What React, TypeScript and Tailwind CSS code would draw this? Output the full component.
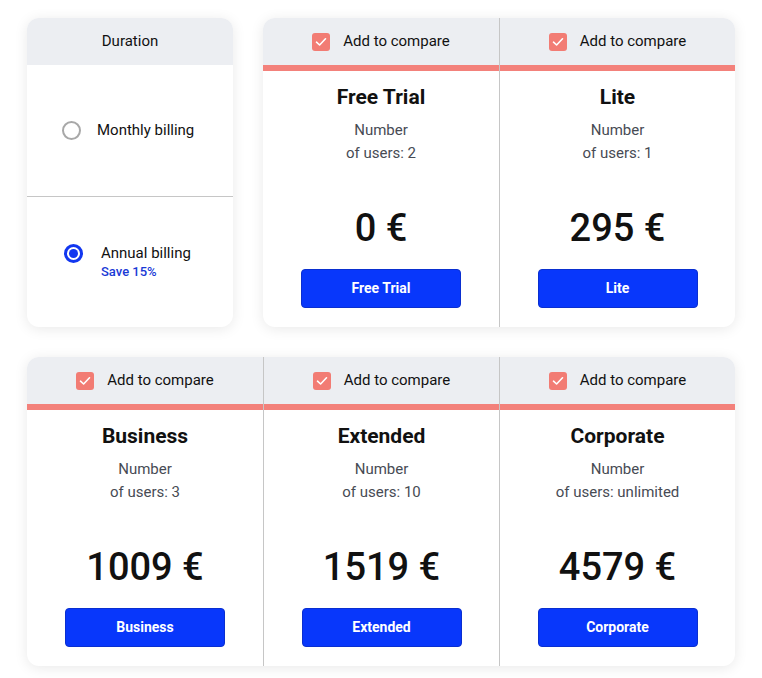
// @ts-nocheck
import React from "react"

const plans1 = [
  { name: "Free Trial", users: "2", price: "0 €" },
  { name: "Lite", users: "1", price: "295 €" },
]

const plans2 = [
  { name: "Business", users: "3", price: "1009 €" },
  { name: "Extended", users: "10", price: "1519 €" },
  { name: "Corporate", users: "unlimited", price: "4579 €" },
]

function Check() {
  return (
    <span className="w-[18px] h-[18px] rounded-[3px] bg-[#f27c74] flex items-center justify-center">
      <svg width="12" height="10" viewBox="0 0 12 10" fill="none">
        <path d="M1.5 5.2 L4.6 8 L10.5 1.8" stroke="white" strokeWidth="1.6" strokeLinecap="round" strokeLinejoin="round" />
      </svg>
    </span>
  )
}

function Plan({ plan, first }) {
  return (
    <div className={"w-[236px] flex flex-col " + (first ? "" : "border-l border-[#c6c6c6]")}>
      <div className="h-[47px] bg-[#eceef2] flex items-center justify-center gap-[13px]">
        <Check />
        <span className="text-[15px] text-[#111]">Add to compare</span>
      </div>
      <div className="h-[6px] bg-[#f3817b]" />
      <div className="flex flex-col items-center pt-[14px] pb-[19px]">
        <h2 className="text-[21px] leading-[24px] font-bold text-[#111]">{plan.name}</h2>
        <div className="mt-[10px] text-[15px] leading-[23px] text-[#474b54] text-center">
          <div>Number</div>
          <div>of users: {plan.users}</div>
        </div>
        <div className="mt-[41px] text-[38px] leading-[44px] font-medium text-[#111]">{plan.price}</div>
        <button className="mt-[19px] w-[160px] h-[39px] rounded-[4px] bg-[#0837fb] border border-[#0a2fd0] text-white text-[14px] font-bold">
          {plan.name}
        </button>
      </div>
    </div>
  )
}

export default function App() {
  return (
    <div className="min-h-screen bg-white px-[27px] pt-[18px] flex flex-col gap-[30px]" style={{ fontFamily: "Roboto, 'Liberation Sans', sans-serif" }}>
      <div className="flex gap-[30px]">
        <div className="w-[206px] rounded-[12px] bg-white shadow-[0_2px_14px_rgba(0,0,0,0.09)] overflow-hidden flex flex-col">
          <div className="h-[47px] bg-[#eceef2] flex items-center justify-center text-[15px] text-[#111]">Duration</div>
          <div className="h-[132px] flex items-center pl-[35px] gap-[16px] border-b border-[#c6c6c6]">
            <span className="w-[19px] h-[19px] rounded-full border-2 border-[#a8a8a8]" />
            <span className="text-[15px] text-[#111]">Monthly billing</span>
          </div>
          <div className="flex-1 flex items-center pl-[37px] gap-[18px]">
            <span className="w-[19px] h-[19px] rounded-full border-[3px] border-[#1237f0] flex items-center justify-center -mt-[18px]">
              <span className="w-[9px] h-[9px] rounded-full bg-[#1237f0]" />
            </span>
            <div className="flex flex-col">
              <span className="text-[15px] leading-[20px] text-[#111]">Annual billing</span>
              <span className="text-[13px] leading-[18px] font-medium text-[#1a3ad6]">Save 15%</span>
            </div>
          </div>
        </div>
        <div className="rounded-[12px] bg-white shadow-[0_2px_14px_rgba(0,0,0,0.09)] overflow-hidden flex">
          {plans1.map((p, i) => <Plan key={p.name} plan={p} first={i === 0} />)}
        </div>
      </div>
      <div className="flex">
        <div className="rounded-[12px] bg-white shadow-[0_2px_14px_rgba(0,0,0,0.09)] overflow-hidden flex">
          {plans2.map((p, i) => <Plan key={p.name} plan={p} first={i === 0} />)}
        </div>
      </div>
    </div>
  )
}
